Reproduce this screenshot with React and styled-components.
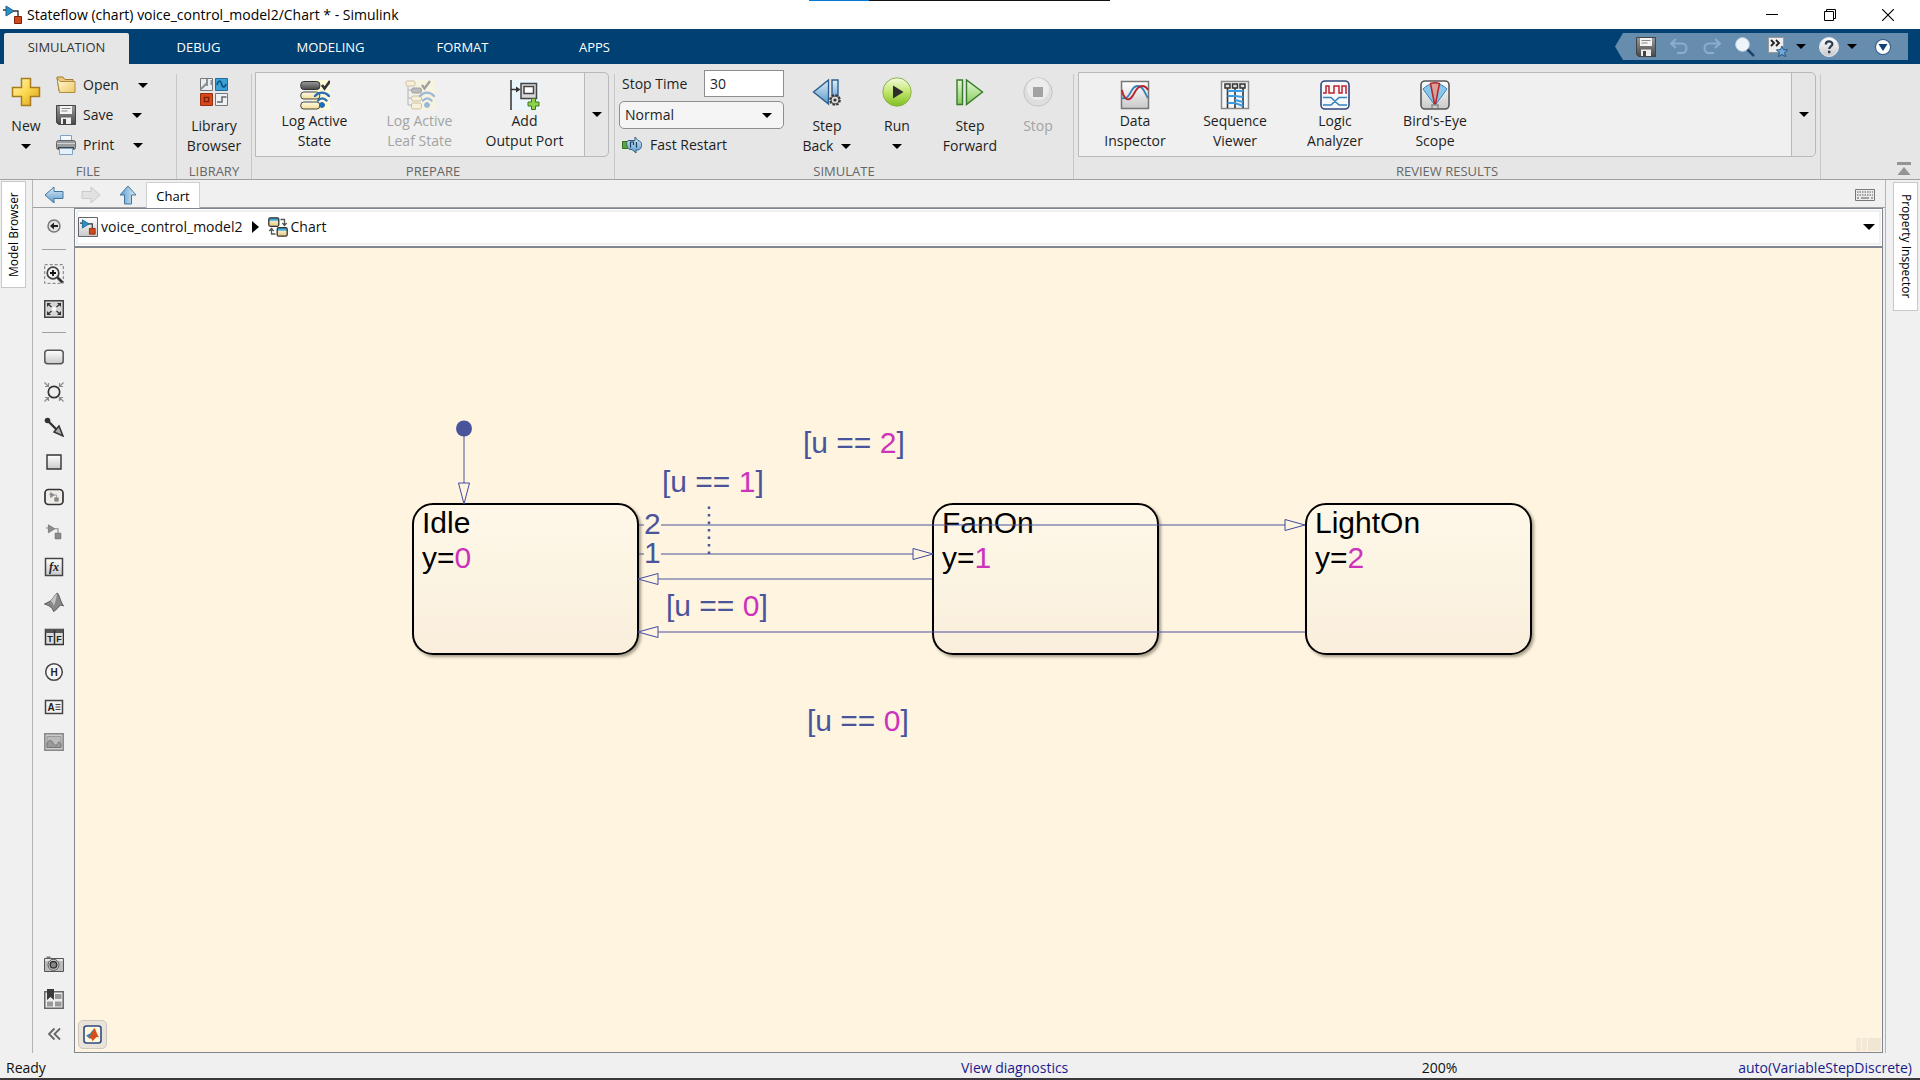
import React from "react";
import styled, { createGlobalStyle } from "styled-components";

const color = {
  navy: "#004073",
  quick: "#678dae",
  strip: "#e6e6e6",
  panel: "#f0f0f0",
  rule: "#c8c8c8",
  edge: "#a0a0a0",
  frame: "#80868f",
  canvas: "#fff4e0",
  ink: "#1e1e1e",
  muted: "#a3a3a3",
  link: "#1a1a8c",
  flow: "#4a549c",
  value: "#cc33bb",
};

const uiFont = `"Open Sans", "Noto Sans", sans-serif`;

const GlobalStyle = createGlobalStyle`
  * { box-sizing: border-box; }
  body { margin: 0; background: ${color.panel}; }
  button, input, select { font: inherit; color: inherit; }
  button { border: 0; padding: 0; background: none; }
  svg { display: block; flex: none; }
`;

const Page = styled.div`
  position: relative;
  display: flex;
  flex-direction: column;
  height: 100vh;
  overflow: hidden;
  font: 14px/20px ${uiFont};
  color: ${color.ink};
  border-bottom: 2px solid #3a383b;
`;

/* ---------- title bar ---------- */

const TitleBar = styled.header`
  display: flex;
  align-items: center;
  height: 29px;
  padding: 0 3px;
  gap: 4px;
  background: #fff;
  color: #000;
`;

const Title = styled.h1`
  flex: 1;
  margin: 0;
  font-size: 14px;
  font-weight: 400;
`;

const WindowButtons = styled.div`
  display: flex;
`;

const WindowButton = styled.button`
  display: grid;
  place-items: center;
  width: 58px;
  height: 28px;
`;

const CoveredWindow = styled.div`
  position: absolute;
  top: 0;
  left: 809px;
  width: 301px;
  height: 1px;
  background: linear-gradient(90deg, #0078d7 60px, #111 60px);
`;

/* ---------- ribbon tabs ---------- */

const TabBar = styled.nav`
  display: flex;
  align-items: stretch;
  height: 35px;
  padding: 4px 12px 0 4px;
  gap: 7px;
  background: ${color.navy};
`;

const Tab = styled.button`
  width: 125px;
  padding-bottom: 4px;
  font-size: 13px;
  color: ${(p) => (p.$active ? "#333" : "#fff")};
  background: ${(p) => (p.$active ? color.strip : "transparent")};
  border-radius: 2px 2px 0 0;
`;

const QuickAccess = styled.div`
  display: flex;
  align-items: center;
  gap: 13px;
  height: 27px;
  margin-left: auto;
  padding: 0 17px 0 21px;
  background: ${color.quick};
  clip-path: polygon(0 50%, 8px 0, 100% 0, 100% 100%, 8px 100%);
`;

const IconPair = styled.div`
  display: flex;
  align-items: center;
  gap: 8px;
`;

const QuickMenu = styled.button`
  padding-left: 5px;
`;

/* ---------- toolstrip ---------- */

const Toolstrip = styled.section`
  display: flex;
  height: 116px;
  background: ${color.strip};
  border-bottom: 1px solid ${color.edge};
`;

const Section = styled.section`
  display: flex;
  flex-direction: column;
  width: ${(p) => p.$width}px;
`;

const SectionBody = styled.div`
  flex: 1;
  display: flex;
  align-items: flex-start;
  padding-top: 6px;
  padding-left: ${(p) => p.$start || 0}px;
  padding-right: ${(p) => p.$end || 0}px;
`;

const SectionName = styled.h2`
  margin: 0;
  font-size: 13px;
  line-height: 16px;
  font-weight: 400;
  text-align: center;
  color: #666;
`;

const Rule = styled.div`
  width: 1px;
  margin-top: 10px;
  background: ${color.rule};
`;

const LargeButton = styled.button`
  display: flex;
  flex-direction: column;
  align-items: center;
  gap: ${(p) => (p.$inGallery ? 1 : 9)}px;
  width: ${(p) => p.$width}px;
  padding-top: 7px;
  color: ${(p) => (p.disabled ? color.muted : color.ink)};
`;

const ButtonLine = styled.span`
  display: flex;
  align-items: center;
  justify-content: center;
  gap: 8px;
  height: 20px;
  white-space: nowrap;
`;

const SmallButtons = styled.div`
  padding-left: 4px;
`;

const SmallRow = styled.div`
  display: flex;
  align-items: center;
  gap: 19px;
  height: 30px;
`;

const SmallButton = styled.button`
  display: flex;
  align-items: center;
  gap: 7px;
`;

const Gallery = styled.div`
  display: flex;
  width: 100%;
  height: 85px;
  margin-top: 2px;
  border: 1px solid #b9b9b9;
  border-radius: 0 5px 5px 0;
`;

const GalleryItems = styled.div`
  flex: 1;
  display: flex;
  padding-left: 6px;
  background: ${color.panel};
`;

const GalleryMore = styled.button`
  display: grid;
  place-items: center;
  width: 24px;
  border-left: 1px solid #b9b9b9;
`;

const Fields = styled.div`
  display: flex;
  flex-direction: column;
  gap: 4px;
  width: 165px;
  margin-right: 8px;
`;

const FieldRow = styled.div`
  display: flex;
  align-items: center;
  justify-content: space-between;
  padding-left: 3px;
`;

const TextField = styled.input`
  width: 80px;
  height: 27px;
  padding: 0 5px;
  background: #fff;
  border: 1px solid #8e8e8e;
`;

const SelectWrap = styled.div`
  position: relative;
  & > svg {
    position: absolute;
    right: 12px;
    top: 12px;
    pointer-events: none;
  }
`;

const SelectField = styled.select`
  appearance: none;
  width: 100%;
  height: 28px;
  padding: 0 5px;
  background: #f5f5f5;
  border: 1px solid #8e8e8e;
  border-radius: 5px;
`;

const FastRestart = styled(SmallButton)`
  height: 24px;
  padding-left: 3px;
  gap: 8px;
`;

const CollapseStrip = styled.button`
  align-self: flex-end;
  margin: 0 9px 3px auto;
`;

/* ---------- workspace ---------- */

const Workspace = styled.main`
  flex: 1;
  display: flex;
  min-height: 0;
`;

const Dock = styled.aside`
  width: ${(p) => (p.$right ? 35 : 33)}px;
  padding: ${(p) => (p.$right ? "2px 2px 0 7px" : "1px 6px 0 1px")};
  border: 0 solid #b4b4b4;
  border-width: ${(p) => (p.$right ? "0 0 0 1px" : "0 1px 0 0")};
`;

const DockTab = styled.button`
  display: grid;
  place-items: center;
  width: 25px;
  height: ${(p) => p.$length}px;
  font-size: 12px;
  line-height: 16px;
  color: #000;
  writing-mode: vertical-rl;
  background: #fff;
  border: 1px solid #c8c8c8;
  transform: ${(p) => (p.$flipped ? "rotate(180deg)" : "none")};
`;

const Editor = styled.div`
  flex: 1;
  display: flex;
  flex-direction: column;
`;

const DocumentBar = styled.div`
  display: flex;
  align-items: center;
  height: 28px;
  padding: 2px 10px 0 11px;
  gap: 17px;
  border-bottom: 1px solid ${color.edge};
`;

const DocumentTab = styled.button`
  align-self: stretch;
  width: 54px;
  margin: 0 auto -1px -9px;
  color: #000;
  font-size: 13px;
  background: #fff;
  border: 1px solid #d0d0d0;
  border-bottom: 0;
`;

const EditorBody = styled.div`
  flex: 1;
  display: flex;
  min-height: 0;
  padding-right: 2px;
`;

const Palette = styled.div`
  display: flex;
  flex-direction: column;
  align-items: center;
  width: 41px;
  padding-bottom: 2px;
`;

const PaletteButton = styled.button`
  display: grid;
  place-items: center;
  width: 30px;
  height: 35px;
`;

const PaletteRule = styled.hr`
  width: 24px;
  height: 1px;
  margin: 6px 0;
  border: 0;
  background: ${color.edge};
`;

const Spacer = styled.div`
  flex: 1;
`;

const Sheet = styled.div`
  flex: 1;
  display: flex;
  flex-direction: column;
  border: 1px solid ${color.frame};
`;

const Breadcrumb = styled.nav`
  display: flex;
  align-items: center;
  height: 39px;
  gap: 9px;
  padding: 0 7px 1px 1px;
  background: #fff;
  border-bottom: 2px solid ${color.frame};
  box-shadow: inset 0 0 0 1px #fff, inset 0 0 0 3px ${color.panel};
`;

const Crumb = styled.a`
  display: flex;
  align-items: center;
  gap: 3px;
  padding-left: ${(p) => (p.$first ? 2 : 0)}px;
  color: #111;
  text-decoration: none;
`;

const CrumbMenu = styled.button`
  margin-left: auto;
`;

/* ---------- chart ---------- */

const Canvas = styled.div`
  position: relative;
  flex: 1;
  overflow: hidden;
  background: ${color.canvas};
  font: 30px/35px "Liberation Sans", Arial, sans-serif;
`;

const StateBox = styled.div`
  position: absolute;
  left: ${(p) => p.$x}px;
  top: ${(p) => p.$y}px;
  width: 227px;
  height: 152px;
  padding: 0 8px;
  color: #000;
  background: linear-gradient(#fff7e8, #fbf3e1 60%, #faeddc);
  border: 2px solid #000;
  border-radius: 21px;
  box-shadow: 2px 2px 3px rgba(60, 50, 30, 0.45);
`;

const Edges = styled.svg`
  position: absolute;
  inset: 0;
  width: 100%;
  height: 100%;
  pointer-events: none;
`;

const EdgeLabel = styled.div`
  position: absolute;
  left: ${(p) => p.$x}px;
  top: ${(p) => p.$y}px;
  white-space: nowrap;
  color: ${color.flow};
`;

const EdgeOrder = styled(EdgeLabel)`
  line-height: 28px;
  background: linear-gradient(transparent 9px, ${color.canvas} 9px 21px, transparent 21px);
`;

const Value = styled.span`
  color: ${color.value};
`;

const LanguageBadge = styled.button`
  position: absolute;
  left: 3px;
  bottom: 3px;
  display: grid;
  place-items: center;
  width: 29px;
  height: 29px;
  background: #e9e3da;
  border: 1px solid #cbc8c2;
  border-radius: 5px;
`;

const Grip = styled.div`
  position: absolute;
  right: 1px;
  bottom: 1px;
  width: 25px;
  height: 13px;
  background: linear-gradient(90deg, #f2e8d5 5px, #fff4e0 5px 6px, #f2e8d5 6px 11px, #fff4e0 11px 12px, #f0e6d3 12px);
`;

/* ---------- status bar ---------- */

const StatusBar = styled.footer`
  display: grid;
  grid-template-columns: 50% 24% 26%;
  height: 25px;
  padding-top: 5px;
  color: #111;
`;

const StatusCell = styled.div`
  display: flex;
  justify-content: space-between;
  padding: 0 8px 0 ${(p) => p.$start || 1}px;
`;

const StatusLink = styled.a`
  color: ${color.link};
  text-decoration: none;
`;

/* ---------- drawings ---------- */

const Caret = ({ fill = "#000", w = 10 }) => (
  <svg width={w} height={w / 2} viewBox="0 0 10 5"><path d="M0 0h10L5 5z" fill={fill} /></svg>
);

const Gradients = () => (
  <svg width="0" height="0" style={{ position: "absolute" }} aria-hidden="true">
    <defs>
      <linearGradient id="gold" x2="1" y2="1"><stop stopColor="#fff6c0" /><stop offset=".5" stopColor="#fbd84c" /><stop offset="1" stopColor="#d99a1e" /></linearGradient>
      <linearGradient id="folder" x2="1" y2="1"><stop stopColor="#fffbe0" /><stop offset="1" stopColor="#edc964" /></linearGradient>
      <linearGradient id="sky" x2="0" y2="1"><stop stopColor="#dcecf8" /><stop offset="1" stopColor="#5d9bcb" /></linearGradient>
      <linearGradient id="mint" x2="0" y2="1"><stop stopColor="#e6f8d4" /><stop offset="1" stopColor="#84cc5e" /></linearGradient>
      <linearGradient id="lime" x2="0" y2="1"><stop stopColor="#f4fbe2" /><stop offset=".5" stopColor="#c2e66c" /><stop offset="1" stopColor="#7fbe22" /></linearGradient>
      <linearGradient id="silver" x2="0" y2="1"><stop stopColor="#fff" /><stop offset="1" stopColor="#c9c9c9" /></linearGradient>
      <linearGradient id="steel" x2="0" y2="1"><stop stopColor="#9a9a9a" /><stop offset="1" stopColor="#484848" /></linearGradient>
      <linearGradient id="cream" x2="0" y2="1"><stop stopColor="#fffbe6" /><stop offset="1" stopColor="#f3dc94" /></linearGradient>
      <linearGradient id="stateTile" x2="0" y2="1"><stop stopColor="#1f8fc4" /><stop offset=".3" stopColor="#5bb8dc" /><stop offset=".45" stopColor="#f8e9bd" /><stop offset="1" stopColor="#e3c57c" /></linearGradient>
    </defs>
  </svg>
);

const ModelGlyph = ({ grey }) => (
  <>
    <path d="M0 5h3M10 6h5v5" fill="none" stroke={grey ? "#8a8a8a" : "#333"} strokeWidth="1.4" />
    <path d="M3 1v10l8-5z" fill={grey ? "#8c8c8c" : "#2d8fc4"} stroke={grey ? "#777" : "#14608f"} />
    <path d="M11.5 11.5h7v7h-7z" fill={grey ? "#8c8c8c" : "#d04a1c"} stroke={grey ? "#666" : "#7d2208"} />
  </>
);

const AppIcon = () => <svg width="20" height="20" viewBox="0 0 20 20"><ModelGlyph /></svg>;

const PlusIcon = () => (
  <svg width="30" height="30" viewBox="0 0 30 30"><path d="M10.500 1.500h9v9h9v9h-9v9h-9v-9h-9v-9h9z" fill="url(#gold)" stroke="#a87b1f" strokeWidth="1.500" /></svg>
);
const FolderIcon = () => (
  <svg width="20" height="18" viewBox="0 0 20 18"><path d="M1 1h6l2 2.500h8V15H3z" fill="#e9c877" stroke="#a47d34" /><path d="M4 5.500h15v11H3.500L1 2z" fill="url(#folder)" stroke="#b08a3e" /></svg>
);
const DiskIcon = () => (
  <svg width="20" height="20" viewBox="0 0 20 20"><path d="M.5.5h19v19h-17l-2-2z" fill="url(#steel)" stroke="#444" /><path d="M4 1h12v8H4z" fill="#f4f4f4" /><path d="M5.500 3.500h9M5.500 6h6" stroke="#888" /><path d="M5 12.500h10V19H5z" fill="#eee" /><path d="M7 14h3v5H7z" fill="#444" /></svg>
);
const PrinterIcon = () => (
  <svg width="20" height="20" viewBox="0 0 20 20"><path d="M4.500.5h11V7h-11z" fill="#f3f8fc" stroke="#7fa3c0" /><rect x=".5" y="5.500" width="19" height="9" rx="2" fill="#9a9da0" stroke="#666" /><path d="M1 8.500h18" stroke="#d4d4d4" /><path d="M2 12h16v2H2z" fill="#444" /><path d="M3.500 13.500h13v6h-13z" fill="#e6f1fa" stroke="#7fa3c0" /></svg>
);
const LibraryIcon = () => (
  <svg width="30" height="30" viewBox="0 0 30 30">
    <path d="M1.500 1.500h12v12h-12z" fill="#e8edf1" stroke="#777" /><path d="M2 12L8 6M8 2v7M12.500 3v5" stroke="#8a8f94" strokeWidth="2" fill="none" />
    <path d="M16.500 1.500h12v12h-12z" fill="#3c9fd6" stroke="#1d6d9e" /><path d="M18 8c1-5 3.500-5 4.500-1s3.500 4 4.500 0" fill="none" stroke="#0c4d78" strokeWidth="1.500" />
    <path d="M1.500 16.500h12v12h-12z" fill="#d8481a" stroke="#92300f" /><path d="M5.500 20.500h4v4h-4z" fill="#e8602c" stroke="#7d2208" strokeWidth="1.500" />
    <path d="M16.500 16.500h12v12h-12z" fill="#eef1f4" stroke="#777" /><path d="M18 25h5v-5h4.500" fill="none" stroke="#666" strokeWidth="1.500" />
  </svg>
);
const Waves = () => (
  <g fill="none" stroke="#2a6fb5" strokeWidth="2.400" strokeLinecap="round"><path d="M15 16c4-4.500 10-4.500 14 0" /><path d="M18 20.500c2.500-2.800 6-2.800 8.500 0" /><circle cx="22" cy="25" r="2.500" fill="#1a6fc0" stroke="#2a6fb5" strokeWidth="1" /></g>
);
const LogStateIcon = () => (
  <svg width="30" height="30" viewBox="0 0 30 30"><path d="M16 0h14v30H10z" fill="#fffbd8" /><rect x=".8" y="1.500" width="19" height="8" rx="3" fill="url(#steel)" stroke="#333" /><rect x=".8" y="12" width="19" height="7" rx="3" fill="url(#cream)" stroke="#444" /><rect x=".8" y="22" width="19" height="7" rx="3" fill="url(#cream)" stroke="#444" /><path d="M22 5l2.500 3.500L30 1" fill="none" stroke="#333" strokeWidth="2.600" /><Waves /></svg>
);
const LogLeafIcon = () => (
  <svg width="30" height="30" viewBox="0 0 30 30" opacity=".42"><path d="M10 0h20v30H8z" fill="#fff9cc" /><path d="M3 6v19h4M3 10h3M3 18h3" fill="none" stroke="#666" /><rect x="1" y="1" width="9" height="5" rx="1.500" fill="#fff3c0" stroke="#a07d2a" /><rect x="6.500" y="8" width="10" height="5" rx="2" fill="#777" stroke="#333" /><rect x="6.500" y="16" width="10" height="5" rx="2" fill="#fff3c0" stroke="#a07d2a" /><rect x="6.500" y="23" width="10" height="6" rx="2" fill="#fff3c0" stroke="#a07d2a" /><path d="M17 5l2.500 3.500L25 1" fill="none" stroke="#333" strokeWidth="2.400" /><Waves /></svg>
);
const OutputPortIcon = () => (
  <svg width="30" height="30" viewBox="0 0 30 30"><path d="M1 0h29v30H1z" fill="#eaf5fc" /><path d="M1 0v30M1 9.500h6" stroke="#333" strokeWidth="1.500" /><path d="M6 6.500l4.500 3L6 12.500z" fill="#333" /><path d="M11 3.500h15.500v15H11z" fill="#d8d8d8" stroke="#444" strokeWidth="1.500" /><path d="M14 6.500h9.500v7H14z" fill="#fff" stroke="#444" strokeWidth="1.500" /><path d="M21.500 18.500h4v3.500H29v4h-3.500v3.500h-4V26H18v-4h3.500z" fill="#8fd14a" stroke="#3c7a1c" /></svg>
);
const FastIcon = () => (
  <svg width="20" height="18" viewBox="0 0 20 18"><path d="M.5 5.500h5v7h-5z" fill="#58a832" stroke="#346f1c" /><path d="M6 4.500h7V1l3 3.500c5 1 5 8 0 9.500h-2v3l-4-3.500H8C4 12 4 6 6 4.500z" fill="url(#sky)" stroke="#2d5f86" /><path d="M8.500 11.500V6h3v3M14.500 6v5.500" fill="none" stroke="#173e60" strokeWidth="1.200" /></svg>
);
const StepBackIcon = () => (
  <svg width="30" height="30" viewBox="0 0 30 30"><path d="M16.500 3v24L1.500 15z" fill="url(#sky)" stroke="#2c5f8d" strokeWidth="1.400" /><path d="M20 3h6v22h-6z" fill="url(#sky)" stroke="#2c5f8d" strokeWidth="1.400" /><circle cx="23" cy="23" r="4.500" fill="#bbb" stroke="#333" strokeWidth="2.600" strokeDasharray="2.200 1.300" /><circle cx="23" cy="23" r="4" fill="#ddd" stroke="#444" /><circle cx="23" cy="23" r="1.600" fill="#333" /></svg>
);
const RunIcon = () => (
  <svg width="30" height="30" viewBox="0 0 30 30"><circle cx="15" cy="15" r="14.200" fill="url(#lime)" stroke="#8fb04e" /><path d="M11 8.500v13L21.500 15z" fill="#2d2d2d" /></svg>
);
const StepForwardIcon = () => (
  <svg width="30" height="30" viewBox="0 0 30 30"><path d="M2 3h5.500v24.500H2z" fill="url(#mint)" stroke="#3a7a2c" strokeWidth="1.400" /><path d="M11.500 3v24.500L27.500 15z" fill="url(#mint)" stroke="#3a7a2c" strokeWidth="1.400" /></svg>
);
const StopIcon = () => (
  <svg width="30" height="30" viewBox="0 0 30 30"><circle cx="15" cy="15" r="14.200" fill="#dedede" stroke="#c4c4c4" /><circle cx="15" cy="12" r="11" fill="#ececec" /><path d="M10 10h10v10H10z" fill="#a3a3a3" /></svg>
);
const InspectorIcon = () => (
  <svg width="30" height="30" viewBox="0 0 30 30"><path d="M1.500 1.500h27v27h-27z" fill="url(#silver)" stroke="#777" strokeWidth="1.500" /><path d="M2 18c5 2 7-3 10-8s7-5 10-2 4 8 6 10" fill="none" stroke="#3682bb" strokeWidth="1.800" /><path d="M2 10c1 7 5 12 9 8s5-12 11-12c3 0 5 2 6 4" fill="none" stroke="#b5232b" strokeWidth="1.800" /></svg>
);
const SequenceIcon = () => (
  <svg width="30" height="30" viewBox="0 0 30 30"><path d="M1.500 1.500h27v27h-27z" fill="#f4f7fa" stroke="#888" strokeWidth="1.500" /><path d="M7.500 8v20M15 8v20M23 8v20" stroke="#333" strokeWidth="1.600" /><path d="M7.500 11H23M7.500 16H15l8 1M7.500 23H15l8 3M15 20l8 2" fill="none" stroke="#3a9be0" strokeWidth="2" /><g fill="#ddd" stroke="#333" strokeWidth="1.500"><path d="M5 4h5v4H5zM12.500 4h5v4h-5zM20 4h5v4h-5z" /></g></svg>
);
const LogicIcon = () => (
  <svg width="30" height="30" viewBox="0 0 30 30"><rect x="1" y="1" width="28" height="28" rx="4" fill="#f6f8fb" stroke="#30477a" strokeWidth="1.600" /><path d="M3 13h3V6h3v7h5V6h5v7h3V6h4v7h1" fill="none" stroke="#c0202c" strokeWidth="1.500" /><path d="M3 17.500h8l8 7.500h8M3 25h8l8-7.500h8" fill="none" stroke="#3682bb" strokeWidth="1.600" /></svg>
);
const BirdsEyeIcon = () => (
  <svg width="30" height="30" viewBox="0 0 30 30"><rect x="1" y="1" width="28" height="28" rx="4" fill="url(#silver)" stroke="#555" strokeWidth="1.600" /><path d="M3 9c6-7 18-7 24 0L16 24h-2z" fill="#8ac6ea" stroke="#3682bb" /><path d="M10.500 3.500c3-1 6-1 9 0L15.500 24h-1z" fill="#d9a09a" stroke="#b5232b" strokeWidth="1.500" /><path d="M12 28v-3h6v3" fill="none" stroke="#888" strokeWidth="1.400" /></svg>
);

const UndoIcon = ({ flip }) => (
  <svg width="20" height="18" viewBox="0 0 20 18"><g transform={flip ? "translate(20 0) scale(-1 1)" : undefined}><path d="M7 1L2 5.500 7 10M2 5.500h11c6 0 6 9.500 0 9.500H8" fill="none" stroke="#8aaecb" strokeWidth="2" /></g></svg>
);
const SearchIcon = () => (
  <svg width="20" height="20" viewBox="0 0 20 20"><path d="M12 12l7 7" stroke="#1d456b" strokeWidth="2.500" /><circle cx="7.500" cy="7.500" r="6.800" fill="#eef5fa" stroke="#c7d8e6" /></svg>
);
const FavoriteIcon = () => (
  <svg width="20" height="20" viewBox="0 0 20 20"><path d="M.5.5h15v15H.5z" fill="#eee" stroke="#999" /><path d="M3 3l3 3-3 3M8 3l3 3-3 3" fill="none" stroke="#222" strokeWidth="1.800" /><path d="M14 9l1.600 3.600 4 .4-3 2.600 1 4-3.600-2-3.600 2 1-4-3-2.600 4-.4z" fill="#6fa8da" stroke="#2a5480" /></svg>
);
const HelpIcon = () => (
  <svg width="20" height="20" viewBox="0 0 20 20"><circle cx="10" cy="10" r="9.500" fill="url(#silver)" stroke="#dde5ec" /><path d="M6.800 7.500c0-4 6.600-4 6.600-.4 0 2.400-3.200 2.400-3.200 5" fill="none" stroke="#2c3e55" strokeWidth="2.200" /><circle cx="10.200" cy="15" r="1.400" fill="#2c3e55" /></svg>
);
const MoreRoundIcon = () => (
  <svg width="16" height="16" viewBox="0 0 16 16"><circle cx="8" cy="8" r="8" fill="#2b5e8c" /><circle cx="8" cy="8" r="7" fill="#fff" /><path d="M3.500 5h9L8 12z" fill="#0f4373" /></svg>
);

const ArrowIcon = ({ pale, up }) => (
  <svg width="20" height="20" viewBox="0 0 20 20"><g transform={up ? "rotate(90 10 10)" : pale ? "rotate(180 10 10)" : undefined}><path d="M1 10l9-8v4.500h9v7h-9V18z" fill={pale ? "#e2e2e2" : "url(#sky)"} stroke={pale ? "#cacaca" : "#42769f"} /></g></svg>
);
const KeyboardIcon = () => (
  <svg width="20" height="12" viewBox="0 0 20 12"><path d="M.5.5h19v11H.5z" fill="#ececec" stroke="#777" /><path d="M2 3h16M2 6h16" stroke="#888" strokeWidth="1.600" strokeDasharray="1.500 1" /><path d="M2 9h2M6 9h8M16 9h2" stroke="#888" strokeWidth="1.600" /></svg>
);
const ModelTileIcon = () => (
  <svg width="20" height="20" viewBox="0 0 20 20"><path d="M.5.5h19v19H.5z" fill="url(#silver)" stroke="#666" /><g transform="translate(2 2) scale(.82)"><ModelGlyph /></g></svg>
);
const ChartIcon = () => (
  <svg width="20" height="20" viewBox="0 0 20 20"><rect x=".8" y=".8" width="10" height="8.500" rx="1.500" fill="url(#stateTile)" stroke="#333" strokeWidth="1.300" /><rect x="9.200" y="10.700" width="10" height="8.500" rx="1.500" fill="url(#stateTile)" stroke="#333" strokeWidth="1.300" /><path d="M12.500 2.500h4V8M14.300 6l2.200 2.500L18.700 6M7.500 17h-4v-5M1.300 14l2.200-2.500L5.700 14" fill="none" stroke="#555" strokeWidth="1.300" /></svg>
);

const P = ({ children }) => <svg width="20" height="20" viewBox="0 0 20 20">{children}</svg>;
const glyphText = { fontFamily: "Liberation Sans", fontWeight: 700, fill: "#222", textAnchor: "middle" };

const paletteTop = [
  ["Hide explorer bar", <P><circle cx="10" cy="10" r="6" fill="#e2e2e2" stroke="#777" strokeWidth="1.500" /><path d="M14 10H8" stroke="#222" strokeWidth="2" /><path d="M10 6.500v7L6 10z" fill="#222" /></P>],
  null,
  ["Zoom", <P><path d="M.7.7h18.600v18.600H.7z" fill="none" stroke="#777" strokeDasharray="3 2" /><circle cx="9" cy="9" r="5.800" fill="#f2f2f2" stroke="#444" strokeWidth="1.700" /><path d="M13.500 13.500l5 5" stroke="#333" strokeWidth="2.600" /><path d="M6 9h6M9 6v6" stroke="#111" strokeWidth="1.800" /></P>],
  ["Fit to view", <P><path d="M.7 1.700h18.600v16.600H.7z" fill="#d6d6d6" stroke="#444" strokeWidth="1.500" /><path d="M3 8V4h4zM13 4h4v4zM3 12v4h4zM17 12v4h-4z" fill="#333" /><path d="M4 5l3.500 3M16 5l-3.500 3M4 15l3.500-3M16 15l-3.500-3" stroke="#333" strokeWidth="1.300" /><circle cx="10" cy="10" r="2" fill="#fff" /></P>],
  null,
  ["State", <P><rect x=".8" y="3.300" width="18.400" height="13.400" rx="3" fill="url(#silver)" stroke="#555" strokeWidth="1.500" /></P>],
  ["Junction", <P><circle cx="10" cy="10" r="5.700" fill="#eee" stroke="#333" strokeWidth="1.700" /><path d="M.5.5l4 4m0-3.500v3.500H1M19.500.5l-4 4m0-3.500v3.500H19M.5 19.500l4-4M1 15.500h3.500V19M19.500 19.500l-4-4m3.500 0h-3.500V19" fill="none" stroke="#8a8a8a" strokeWidth="1.200" /></P>],
  ["Default transition", <P><circle cx="3.500" cy="3.500" r="2.800" fill="#333" /><path d="M4 4l9 9" stroke="#333" strokeWidth="2.400" /><path d="M10 15l5-6 4 10z" fill="#aaa" stroke="#333" strokeWidth="1.500" /></P>],
  ["Box", <P><path d="M3 3h14v14H3z" fill="url(#silver)" stroke="#333" strokeWidth="1.400" /></P>],
  ["Simulink state", <P><rect x="1" y="2.500" width="18" height="15" rx="3.500" fill="#eeece6" stroke="#333" strokeWidth="1.700" /><g transform="translate(5 5) scale(.5)"><ModelGlyph grey /></g></P>],
  ["Simulink function", <P><g transform="translate(2 2) scale(.8)"><ModelGlyph grey /></g></P>],
  ["Graphical function", <P><path d="M1.500 1.500h17v17h-17z" fill="url(#silver)" stroke="#444" strokeWidth="1.500" /><text x="10" y="14" fontSize="12" {...glyphText} fontFamily="Liberation Serif" fontStyle="italic">fx</text></P>],
  ["MATLAB function", <P><path d="M.5 12l6-3L13 1c2 0 3 8 6.500 13-2-1-3-1-4 0s-3 4-6 5.500C8.500 16 6.500 14 .5 12z" fill="#888" stroke="#444" strokeWidth=".8" /><path d="M6.500 9c2 1 2.500 2 3 5 2-3 3-8 3.500-13z" fill="#c4c4c4" /></P>],
  ["Truth table", <P><path d="M1.500 2.500h18v15h-18z" fill="#ddd" stroke="#333" strokeWidth="1.500" /><path d="M1.500 2h18v4h-18z" fill="#555" /><path d="M10.500 3v14" stroke="#333" strokeWidth="1.500" /><text x="6" y="15" fontSize="9" {...glyphText}>T</text><text x="15" y="15" fontSize="9" {...glyphText}>F</text></P>],
  ["History junction", <P><circle cx="10" cy="10" r="8.300" fill="#f6f6f6" stroke="#444" strokeWidth="1.500" /><text x="10" y="14" fontSize="10" {...glyphText}>H</text></P>],
  ["Annotation", <P><path d="M1.500 3.500h17v13h-17z" fill="#f2f2f2" stroke="#444" strokeWidth="1.500" /><text x="7" y="13.500" fontSize="10" {...glyphText}>A</text><path d="M11.500 7.500h5M11.500 10h5M11.500 12.500h5" stroke="#444" /></P>],
  ["Image", <P><path d="M.8 1.800h18.400v16.400H.8z" fill="#ccc" stroke="#888" strokeWidth="1.500" /><path d="M3 4.500h14v11H3z" fill="#bbb" stroke="#999" /><path d="M3 11c2-3 4-4 6 0s4 2 5 0 2-1 3 1v3.500H3z" fill="#999" stroke="#777" /></P>],
];

const paletteBottom = [
  ["Screenshot", <P><path d="M.5 4.500h19v13H.5z" fill="#bbb" stroke="#555" /><path d="M2.500 2.500h4v2h-4z" fill="#777" /><path d="M1 5h18v2H1z" fill="#e6e6e6" /><circle cx="9.500" cy="10.800" r="5.500" fill="#ddd" stroke="#555" /><circle cx="9.500" cy="10.800" r="3.300" fill="#888" stroke="#333" strokeWidth="1.500" /></P>],
  ["Viewmarks", <P><path d="M.8 2.800h18.400v16.400H.8z" fill="#eee" stroke="#666" strokeWidth="1.500" /><path d="M11 5h6.500v5H11zM11 12.500h6.500v5H11zM3 12.500h6v5H3z" fill="#999" /><path d="M3 0h7v11l-3.500-3L3 11z" fill="#3a3a3a" /></P>],
  ["Collapse palette", <P><path d="M10.500 4.500L5 10l5.500 5.500M16 4.500L10.500 10l5.500 5.500" fill="none" stroke="#666" strokeWidth="1.800" /></P>],
];

const MatlabBadgeIcon = () => (
  <svg width="19" height="19" viewBox="0 0 19 19"><rect x="1" y="1" width="17" height="17" rx="2.500" fill="#fff8dc" stroke="#2d4a80" strokeWidth="1.600" /><path d="M3 10.500l4-2 4-5-2 8-2 2.500z" fill="#3282b8" /><path d="M6 12.500L11.500 3c1.500 1.500 2 6 4.800 9.500-2-1-3-.5-4 .8l-2.800 3c-.5-2-1.500-3.300-3.500-3.800z" fill="#d6501e" /></svg>
);

/* ---------- composed parts ---------- */

const Large = ({ icon, lines, width, menu, disabled, inGallery }) => (
  <LargeButton $width={width} $inGallery={inGallery} disabled={disabled}>
    {icon}
    <span>
      {lines.map((text, i) => (
        <ButtonLine key={text || i}>
          {text}
          {menu && i === lines.length - 1 && <Caret />}
        </ButtonLine>
      ))}
    </span>
  </LargeButton>
);

const FileRow = ({ icon, name }) => (
  <SmallRow>
    <SmallButton>{icon}{name}</SmallButton>
    <button aria-label={`${name} options`}><Caret /></button>
  </SmallRow>
);

const PaletteItems = ({ items }) =>
  items.map((item, i) =>
    item ? (
      <PaletteButton key={item[0]} aria-label={item[0]}>{item[1]}</PaletteButton>
    ) : (
      <PaletteRule key={i} />
    )
  );

const states = [
  { name: "Idle", value: 0, x: 337 },
  { name: "FanOn", value: 1, x: 857 },
  { name: "LightOn", value: 2, x: 1230 },
];

const conditions = [
  { value: 2, x: 728, y: 177 },
  { value: 1, x: 587, y: 216 },
  { value: 0, x: 591, y: 340 },
  { value: 0, x: 732, y: 455 },
];

const orders = [
  { order: 2, y: 262 },
  { order: 1, y: 291 },
];

const arrowHeads = ["383.500,235 394.500,235 389,256", "838,300.500 838,311.500 858,306", "1210,271.500 1210,282.500 1230,277", "583,325.500 583,336.500 563,331", "583,378.500 583,389.500 563,384"];

const Chart = () => (
  <Canvas>
    {states.map((s) => (
      <StateBox key={s.name} $x={s.x} $y={255}>
        <div>{s.name}</div>
        <div>y=<Value>{s.value}</Value></div>
      </StateBox>
    ))}
    <Edges aria-hidden="true">
      <g stroke={color.flow} strokeWidth="2" opacity=".5">
        <path d="M389 188v47M564 277h646M564 306h274M857 331H583M1230 384H583" fill="none" />
      </g>
      <path d="M634 258.500v48" stroke={color.flow} strokeWidth="2.500" strokeDasharray="2.500 5" />
      <circle cx="389" cy="180.500" r="8" fill={color.flow} />
      {arrowHeads.map((points) => (
        <polygon key={points} points={points} fill={color.canvas} stroke="#3f4ba0" />
      ))}
    </Edges>
    {orders.map((o) => (
      <EdgeOrder key={o.order} $x={569} $y={o.y}>{o.order}</EdgeOrder>
    ))}
    {conditions.map((c) => (
      <EdgeLabel key={`${c.x}-${c.y}`} $x={c.x} $y={c.y}>
        [u == <Value>{c.value}</Value>]
      </EdgeLabel>
    ))}
    <LanguageBadge aria-label="MATLAB action language"><MatlabBadgeIcon /></LanguageBadge>
    <Grip />
  </Canvas>
);

export default function App() {
  return (
    <Page>
      <GlobalStyle />
      <Gradients />
      <TitleBar>
        <AppIcon />
        <Title>Stateflow (chart) voice_control_model2/Chart * - Simulink</Title>
        <WindowButtons>
          <WindowButton aria-label="Minimize"><svg width="12" height="12"><path d="M0 5.500h12" stroke="#000" /></svg></WindowButton>
          <WindowButton aria-label="Restore"><svg width="12" height="12"><path d="M.5 2.500h9v9h-9zM2.500 2V.5h9v9H10" fill="none" stroke="#000" /></svg></WindowButton>
          <WindowButton aria-label="Close"><svg width="12" height="12"><path d="M0 0l12 12M12 0L0 12" stroke="#000" strokeWidth="1.200" /></svg></WindowButton>
        </WindowButtons>
      </TitleBar>
      <CoveredWindow />

      <TabBar>
        {["SIMULATION", "DEBUG", "MODELING", "FORMAT", "APPS"].map((name, i) => (
          <Tab key={name} $active={i === 0}>{name}</Tab>
        ))}
        <QuickAccess>
          <button aria-label="Save"><DiskIcon /></button>
          <button aria-label="Undo"><UndoIcon /></button>
          <button aria-label="Redo"><UndoIcon flip /></button>
          <button aria-label="Search"><SearchIcon /></button>
          <IconPair>
            <button aria-label="Favorites"><FavoriteIcon /></button>
            <Caret />
          </IconPair>
          <IconPair>
            <button aria-label="Help"><HelpIcon /></button>
            <Caret />
          </IconPair>
          <QuickMenu aria-label="More"><MoreRoundIcon /></QuickMenu>
        </QuickAccess>
      </TabBar>

      <Toolstrip>
        <Section $width={176}>
          <SectionBody>
            <Large icon={<PlusIcon />} lines={["New", ""]} width={52} menu />
            <SmallButtons>
              <FileRow icon={<FolderIcon />} name="Open" />
              <FileRow icon={<DiskIcon />} name="Save" />
              <FileRow icon={<PrinterIcon />} name="Print" />
            </SmallButtons>
          </SectionBody>
          <SectionName>FILE</SectionName>
        </Section>
        <Rule />
        <Section $width={74}>
          <SectionBody>
            <Large icon={<LibraryIcon />} lines={["Library", "Browser"]} width={74} />
          </SectionBody>
          <SectionName>LIBRARY</SectionName>
        </Section>
        <Rule />
        <Section $width={362}>
          <SectionBody $start={3} $end={5}>
            <Gallery>
              <GalleryItems>
                <Large inGallery icon={<LogStateIcon />} lines={["Log Active", "State"]} width={105} />
                <Large inGallery disabled icon={<LogLeafIcon />} lines={["Log Active", "Leaf State"]} width={105} />
                <Large inGallery icon={<OutputPortIcon />} lines={["Add", "Output Port"]} width={105} />
              </GalleryItems>
              <GalleryMore aria-label="More prepare tools"><Caret /></GalleryMore>
            </Gallery>
          </SectionBody>
          <SectionName>PREPARE</SectionName>
        </Section>
        <Rule />
        <Section $width={458}>
          <SectionBody $start={4}>
            <Fields>
              <FieldRow>
                <label htmlFor="stop-time">Stop Time</label>
                <TextField id="stop-time" defaultValue="30" />
              </FieldRow>
              <SelectWrap>
                <SelectField aria-label="Simulation mode" defaultValue="Normal">
                  <option>Normal</option>
                </SelectField>
                <Caret />
              </SelectWrap>
              <FastRestart><FastIcon />Fast Restart</FastRestart>
            </Fields>
            <Large icon={<StepBackIcon />} lines={["Step", "Back"]} width={70} menu />
            <Large icon={<RunIcon />} lines={["Run", ""]} width={70} menu />
            <Large icon={<StepForwardIcon />} lines={["Step", "Forward"]} width={76} />
            <Large icon={<StopIcon />} lines={["Stop"]} width={60} disabled />
          </SectionBody>
          <SectionName>SIMULATE</SectionName>
        </Section>
        <Rule />
        <Section $width={746}>
          <SectionBody $start={4} $end={4}>
            <Gallery>
              <GalleryItems>
                <Large inGallery icon={<InspectorIcon />} lines={["Data", "Inspector"]} width={100} />
                <Large inGallery icon={<SequenceIcon />} lines={["Sequence", "Viewer"]} width={100} />
                <Large inGallery icon={<LogicIcon />} lines={["Logic", "Analyzer"]} width={100} />
                <Large inGallery icon={<BirdsEyeIcon />} lines={["Bird's-Eye", "Scope"]} width={100} />
              </GalleryItems>
              <GalleryMore aria-label="More review tools"><Caret /></GalleryMore>
            </Gallery>
          </SectionBody>
          <SectionName>REVIEW RESULTS</SectionName>
        </Section>
        <Rule />
        <CollapseStrip aria-label="Collapse toolstrip">
          <svg width="14" height="14"><path d="M0 0h14v3H0zM7 5l6.500 8H.5z" fill="#949494" /></svg>
        </CollapseStrip>
      </Toolstrip>

      <Workspace>
        <Dock>
          <DockTab $length={107} $flipped>Model Browser</DockTab>
        </Dock>
        <Editor>
          <DocumentBar>
            <button aria-label="Back"><ArrowIcon /></button>
            <button aria-label="Forward" disabled><ArrowIcon pale /></button>
            <button aria-label="Up"><ArrowIcon up /></button>
            <DocumentTab>Chart</DocumentTab>
            <button aria-label="Keyboard shortcuts"><KeyboardIcon /></button>
          </DocumentBar>
          <EditorBody>
            <Palette>
              <PaletteItems items={paletteTop} />
              <Spacer />
              <PaletteItems items={paletteBottom} />
            </Palette>
            <Sheet>
              <Breadcrumb>
                <Crumb $first href="#model"><ModelTileIcon />voice_control_model2</Crumb>
                <svg width="7" height="12"><path d="M0 0l7 6-7 6z" fill="#000" /></svg>
                <Crumb href="#chart"><ChartIcon />Chart</Crumb>
                <CrumbMenu aria-label="Navigation history"><Caret w={12} /></CrumbMenu>
              </Breadcrumb>
              <Chart />
            </Sheet>
          </EditorBody>
        </Editor>
        <Dock $right>
          <DockTab $length={129}>Property Inspector</DockTab>
        </Dock>
      </Workspace>

      <StatusBar>
        <StatusCell $start={6}>Ready</StatusCell>
        <StatusCell><StatusLink href="#diagnostics">View diagnostics</StatusLink></StatusCell>
        <StatusCell>
          <span>200%</span>
          <StatusLink href="#solver">auto(VariableStepDiscrete)</StatusLink>
        </StatusCell>
      </StatusBar>
    </Page>
  );
}
